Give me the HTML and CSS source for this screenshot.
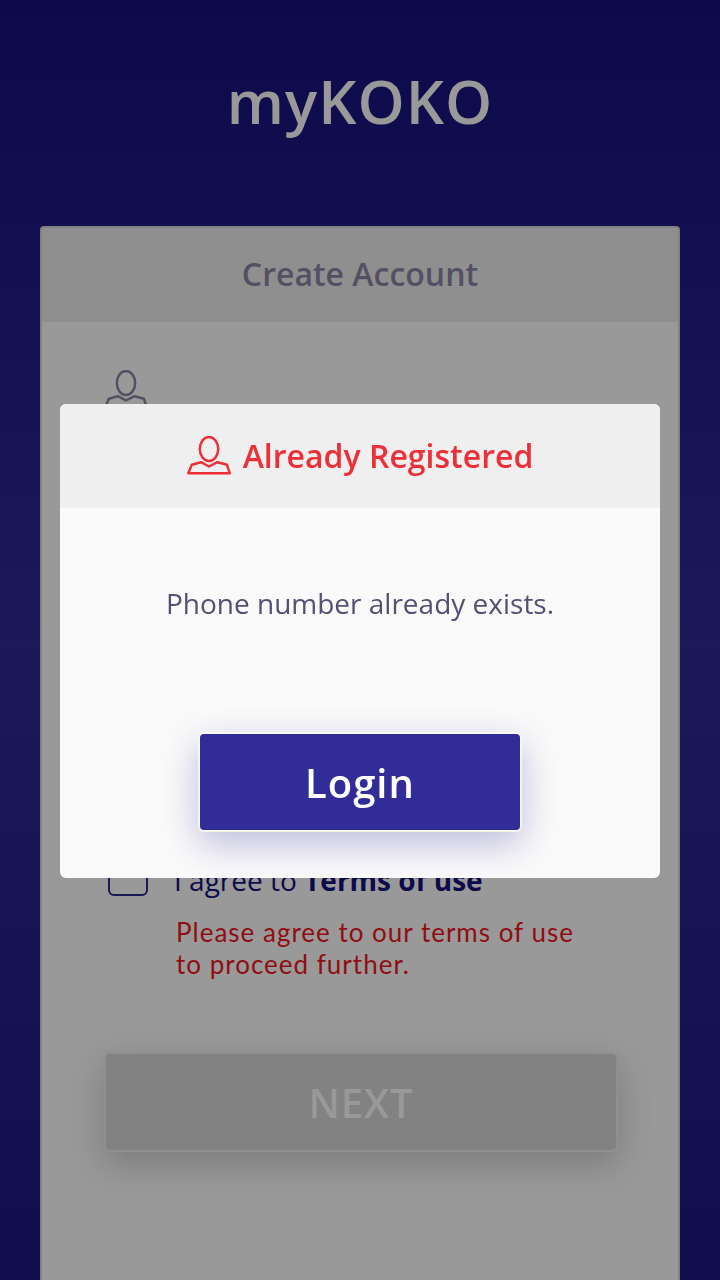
FILE: index.html
```html
<!DOCTYPE html>
<html lang="en">
<head>
<meta charset="utf-8">
<meta name="viewport" content="width=device-width, initial-scale=1">
<title>myKOKO</title>
<link rel="stylesheet" href="styles.css">
</head>
<body>
<div class="page">
  <h1 class="brand">myKOKO</h1>
  <main class="card">
    <h2 class="card-title">Create Account</h2>
    <form class="form">
      <svg class="person" viewBox="0 0 44 40" aria-hidden="true"><ellipse cx="22" cy="13" rx="9.2" ry="12"/><path d="M14 26.2 L4.8 28.8 L1.3 37.2 H42.7 L40 28.8 L30.4 26.2 L22 30.5 Z"/></svg>
      <div class="agree">
        <input class="check" type="checkbox" id="terms">
        <label class="agree-label" for="terms">I agree to <a class="terms" href="#">Terms of use</a></label>
      </div>
      <p class="error">Please agree to our terms of use to proceed further.</p>
      <button class="next" type="button">NEXT</button>
    </form>
  </main>
</div>
<div class="overlay">
  <section class="dialog" role="dialog" aria-labelledby="dialog-title">
    <header class="dialog-head">
      <svg class="person person-alert" viewBox="0 0 44 40" aria-hidden="true"><ellipse cx="22" cy="13" rx="9.2" ry="12"/><path d="M14 26.2 L4.8 28.8 L1.3 37.2 H42.7 L40 28.8 L30.4 26.2 L22 30.5 Z"/></svg>
      <h2 class="dialog-title" id="dialog-title">Already Registered</h2>
    </header>
    <p class="message">Phone number already exists.</p>
    <button class="login" type="button">Login</button>
  </section>
</div>
</body>
</html>
```
FILE: styles.css
```css
* { box-sizing: border-box; }
body {
  margin: 0;
  font-family: "Open Sans", "Noto Sans", sans-serif;
}
h1, h2, p { margin: 0; }
.page {
  display: flex;
  flex-direction: column;
  height: 100vh;
  overflow: hidden;
  padding: 0 40px;
  background: linear-gradient(#0c0a4b, #1c1959 50%, #100e4d);
}
.brand {
  padding: 59px 0 83px;
  font-size: 60px;
  line-height: 84px;
  font-weight: 600;
  letter-spacing: 1px;
  text-align: center;
  color: #999;
}
.card {
  flex: 1;
  border: 2px solid #808080;
  border-bottom: 0;
  border-radius: 4px 4px 0 0;
  background: #999;
}
.card-title {
  padding: 24px 0 26px;
  font-size: 32px;
  line-height: 44px;
  font-weight: 600;
  text-align: center;
  color: #545064;
  background: #8f8f8f;
}
.form { padding: 48px 60px 0 62px; }
.person {
  display: block;
  width: 44px;
  height: 40px;
  fill: none;
  stroke: #545064;
  stroke-width: 2.5;
  stroke-linejoin: round;
}
.agree {
  display: flex;
  align-items: flex-start;
  gap: 26px;
  margin-top: 446px;
}
.check {
  appearance: none;
  width: 40px;
  height: 40px;
  margin: 0 0 0 4px;
  border: 2px solid #1b1858;
  border-radius: 6px;
}
.agree-label {
  padding-top: 4px;
  font-size: 28px;
  line-height: 40px;
  color: #0d0a4b;
}
.terms {
  font-weight: 700;
  color: inherit;
  text-decoration: none;
}
.error {
  margin: 16px 20px 0 72px;
  font-family: Lato, sans-serif;
  font-size: 26px;
  line-height: 32px;
  letter-spacing: 1px;
  color: #900d12;
}
.next {
  display: block;
  width: 100%;
  height: 100px;
  margin-top: 72px;
  padding: 2px 0 0;
  border: 2px solid #909090;
  border-radius: 6px;
  font: 600 40px/56px "Open Sans", sans-serif;
  letter-spacing: 1px;
  color: #999;
  background: #828282;
  box-shadow: 0 12px 36px rgba(0, 0, 0, 0.2);
}
.overlay {
  position: fixed;
  inset: 0;
  display: flex;
  align-items: center;
  padding: 2px 60px 0;
}
.dialog {
  display: flex;
  flex-direction: column;
  align-items: center;
  width: 100%;
  padding-bottom: 46px;
  overflow: hidden;
  border-radius: 6px;
  background: #fafafa;
}
.dialog-head {
  display: flex;
  justify-content: center;
  align-items: center;
  gap: 12px;
  width: 100%;
  height: 104px;
  background: #efefef;
}
.person-alert { stroke: #ed2f38; }
.dialog-title {
  font-size: 32px;
  line-height: 44px;
  font-weight: 600;
  color: #ed2f38;
}
.message {
  padding: 75px 0 109px;
  font-size: 28px;
  line-height: 40px;
  color: #544f73;
}
.login {
  width: 324px;
  height: 100px;
  padding: 2px 0 0;
  border: 2px solid #f6f6fb;
  border-radius: 6px;
  font: 600 40px/56px "Open Sans", sans-serif;
  letter-spacing: 1px;
  color: #fff;
  background: #312c98;
  box-shadow: 0 12px 36px rgba(49, 44, 152, 0.3);
}
```
